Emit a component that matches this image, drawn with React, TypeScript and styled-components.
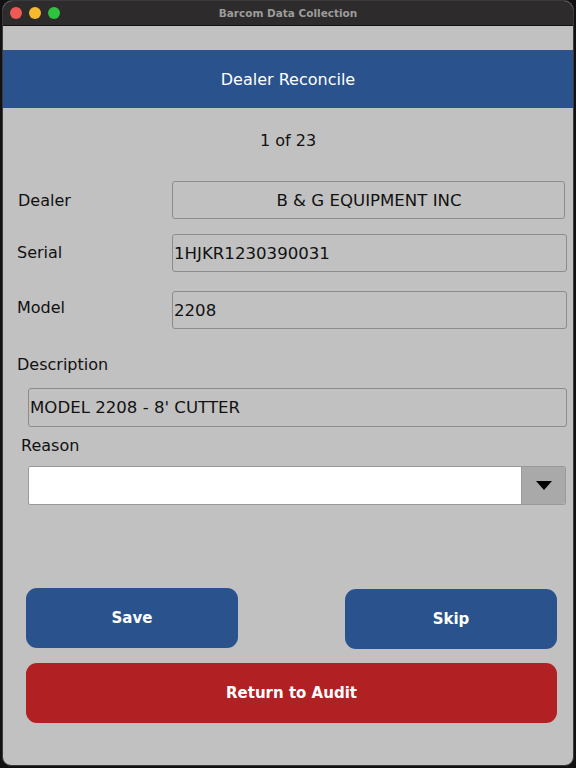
import styled, { createGlobalStyle } from "styled-components";

const GlobalStyle = createGlobalStyle`
	html, body {
		margin: 0;
		padding: 0;
		background: #111;
	}

	* {
		box-sizing: border-box;
	}
`;

const Window = styled.div`
	background: #c1c1c1;
	border: 1px solid #3a3a3a;
	border-radius: 10px 10px 9px 9px;
	display: flex;
	flex-direction: column;
	font-family: "DejaVu Sans", Verdana, sans-serif;
	height: 766px;
	margin: 0 2px;
	overflow: hidden;
`;

const TitleBar = styled.div`
	align-items: center;
	background: #2d2b2b;
	border-bottom: 1px solid #111;
	display: flex;
	flex-shrink: 0;
	height: 25px;
	justify-content: center;
	position: relative;

	h1 {
		color: #9c9c9c;
		font-size: 10.5px;
		font-weight: bold;
		margin: 0;
	}
`;

const Lights = styled.div`
	display: flex;
	gap: 7px;
	left: 7px;
	position: absolute;
	top: 6px;
`;

const Light = styled.span<{ $color: string }>`
	background: ${({ $color }) => $color};
	border-radius: 50%;
	display: block;
	height: 12px;
	width: 12px;
`;

const Header = styled.div`
	align-items: center;
	background: #2a538e;
	color: #fff;
	display: flex;
	font-size: 16px;
	height: 58px;
	justify-content: center;
	margin-top: 24px;
`;

const Counter = styled.div`
	color: #111;
	font-size: 16px;
	line-height: 20px;
	margin-top: 23px;
	text-align: center;
`;

const FieldRow = styled.div<{ $top: number; $labelShift?: number; $left?: number }>`
	align-items: center;
	display: grid;
	grid-template-columns: ${({ $left = 14 }) => 169 - $left}px 1fr;
	margin-top: ${({ $top }) => $top}px;
	padding: 0 6px 0 ${({ $left = 14 }) => $left}px;

	label {
		color: #111;
		font-size: 16px;
		transform: translateY(${({ $labelShift = 0 }) => $labelShift}px);
	}
`;

const ValueBox = styled.div<{ $center?: boolean }>`
	align-items: center;
	border: 1px solid #8c8c8c;
	border-radius: 3px;
	color: #111;
	display: flex;
	font-size: 16.6px;
	height: 38px;
	justify-content: ${({ $center }) => ($center ? "center" : "flex-start")};
	padding-left: 1px;
`;

const BlockLabel = styled.div<{ $top: number; $left: number }>`
	color: #111;
	font-size: 16px;
	line-height: 20px;
	margin-top: ${({ $top }) => $top}px;
	padding-left: ${({ $left }) => $left}px;
`;

const WideBox = styled(ValueBox)`
	height: 39px;
	margin: 13px 6px 0 25px;
`;

const Select = styled.div`
	background: #fff;
	border: 1px solid #9a9a9a;
	border-radius: 2px;
	display: flex;
	height: 39px;
	justify-content: flex-end;
	margin: 10px 7px 0 25px;
	overflow: hidden;
`;

const SelectArrow = styled.div`
	align-items: center;
	background: #a9a9a9;
	border-left: 1px solid #999;
	display: flex;
	justify-content: center;
	width: 44px;
`;

const ButtonRow = styled.div`
	align-items: flex-start;
	display: flex;
	justify-content: space-between;
	margin-top: 83px;
	padding: 0 16px 0 23px;
`;

const ActionButton = styled.button<{ $color: string; $width?: string; $nudge?: number }>`
	background: ${({ $color }) => $color};
	border: none;
	border-radius: 11px;
	color: #fff;
	font-family: "DejaVu Sans", Verdana, sans-serif;
	font-size: 15px;
	font-weight: bold;
	height: 60px;
	margin-top: ${({ $nudge = 0 }) => $nudge}px;
	width: ${({ $width = "212px" }) => $width};
`;

const BottomRow = styled.div`
	margin-top: 14px;
	padding: 0 16px 0 23px;
`;

export default function App() {
	return (
		<>
			<GlobalStyle />
			<Window>
				<TitleBar>
					<Lights>
						<Light $color="#ed5a55" />
						<Light $color="#f4b92f" />
						<Light $color="#2fc13f" />
					</Lights>
					<h1>Barcom Data Collection</h1>
				</TitleBar>
				<Header>Dealer Reconcile</Header>
				<Counter>1 of 23</Counter>

				<FieldRow $top={30} $left={15} style={{ paddingRight: 8 }}>
					<label>Dealer</label>
					<ValueBox $center>B &amp; G EQUIPMENT INC</ValueBox>
				</FieldRow>
				<FieldRow $top={15} $labelShift={-1}>
					<label>Serial</label>
					<ValueBox>1HJKR1230390031</ValueBox>
				</FieldRow>
				<FieldRow $top={19} $labelShift={-3}>
					<label>Model</label>
					<ValueBox>2208</ValueBox>
				</FieldRow>

				<BlockLabel $top={26} $left={14}>
					Description
				</BlockLabel>
				<WideBox>MODEL 2208 - 8' CUTTER</WideBox>

				<BlockLabel $top={9} $left={18}>
					Reason
				</BlockLabel>
				<Select>
					<SelectArrow>
						<svg width="16" height="9" viewBox="0 0 16 9">
							<path d="M0 0 H16 L8 9 Z" fill="#000" />
						</svg>
					</SelectArrow>
				</Select>

				<ButtonRow>
					<ActionButton $color="#2a538e">Save</ActionButton>
					<ActionButton $color="#2a538e" $nudge={1}>
						Skip
					</ActionButton>
				</ButtonRow>
				<BottomRow>
					<ActionButton $color="#b12022" $width="100%">
						Return to Audit
					</ActionButton>
				</BottomRow>
			</Window>
		</>
	);
}
